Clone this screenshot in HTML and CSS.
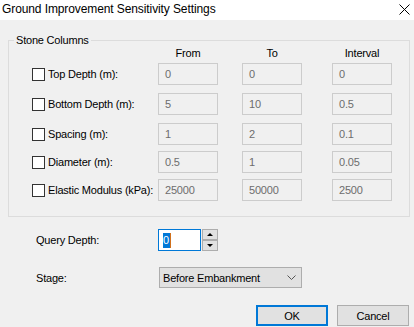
FILE: index.html
```html
<!DOCTYPE html>
<html lang="en">
<head>
  <meta charset="UTF-8" />
  <title>Ground Improvement Sensitivity Settings</title>
  <link rel="stylesheet" href="styles.css">
</head>
<body>
  <div class="dialog">
    <div class="titlebar">
      <span class="title">Ground Improvement Sensitivity Settings</span>
      <svg class="close" width="11" height="11" viewBox="0 0 11 11">
        <path d="M0.5 0.5 L10.5 10.5 M10.5 0.5 L0.5 10.5" stroke="#000" stroke-width="1" fill="none" />
      </svg>
    </div>

    <fieldset class="group">
      <legend>Stone Columns</legend>
      <div class="grid">
        <div></div>
        <div class="col-head">From</div>
        <div class="col-head">To</div>
        <div class="col-head">Interval</div>

        <label class="check"><span class="box"></span>Top Depth (m):</label>
        <div class="field">0</div>
        <div class="field">0</div>
        <div class="field">0</div>

        <label class="check"><span class="box"></span>Bottom Depth (m):</label>
        <div class="field">5</div>
        <div class="field">10</div>
        <div class="field">0.5</div>

        <label class="check"><span class="box"></span>Spacing (m):</label>
        <div class="field">1</div>
        <div class="field">2</div>
        <div class="field">0.1</div>

        <label class="check"><span class="box"></span>Diameter (m):</label>
        <div class="field">0.5</div>
        <div class="field">1</div>
        <div class="field">0.05</div>

        <label class="check"><span class="box"></span>Elastic Modulus (kPa):</label>
        <div class="field">25000</div>
        <div class="field">50000</div>
        <div class="field">2500</div>
      </div>
    </fieldset>

    <div class="row query">
      <span class="row-label">Query Depth:</span>
      <div class="spin">
        <div class="spin-input"><span class="sel">0</span><span class="caret"></span></div>
        <div class="spin-btns">
          <div class="spin-btn"><span class="tri-up"></span></div>
          <div class="spin-btn"><span class="tri-down"></span></div>
        </div>
      </div>
    </div>

    <div class="row stage">
      <span class="row-label">Stage:</span>
      <div class="combo">
        <span>Before Embankment</span>
        <svg width="9" height="5" viewBox="0 0 9 5">
          <path d="M0.5 0.5 L4.5 4.5 L8.5 0.5" stroke="#555" stroke-width="1" fill="none" />
        </svg>
      </div>
    </div>

    <div class="buttons">
      <button class="btn default">OK</button>
      <button class="btn">Cancel</button>
    </div>
  </div>
</body>
</html>
```

FILE: styles.css
```css
body {
  margin: 0;
  font-family: 'Segoe UI', 'Liberation Sans', sans-serif;
  font-size: 11px;
  letter-spacing: -0.2px;
  color: #000;
  background: #f0f0f0;
}
.dialog {
  width: 414px;
  height: 327px;
  background: #f0f0f0;
  overflow: hidden;
}
.titlebar {
  height: 20px;
  background: #fff;
  display: flex;
  align-items: center;
  justify-content: space-between;
  padding: 0 4px 2px 2px;
  box-sizing: border-box;
}
.title {
  font-size: 12px;
  letter-spacing: -0.1px;
}
.group {
  margin: 14px 0 0 8px;
  width: 402px;
  box-sizing: border-box;
  border: 1px solid #dcdcdc;
  padding: 0 0 13px 23px;
  height: 183px;
}
.group legend {
  margin-left: -18px;
  padding: 0 2px;
  line-height: 12px;
}
.grid {
  display: grid;
  grid-template-columns: 126px 84px 90px 60px;
  grid-template-rows: 17px 30px 30px 28px 28px 22px;
  align-items: start;
}
.col-head {
  width: 60px;
  text-align: center;
  line-height: 14px;
}
.check {
  display: flex;
  align-items: center;
  height: 22px;
  white-space: nowrap;
}
.box {
  width: 13px;
  height: 13px;
  box-sizing: border-box;
  border: 1px solid #333;
  background: #fff;
  margin-right: 3px;
  flex: none;
}
.field {
  width: 60px;
  height: 22px;
  box-sizing: border-box;
  border: 1px solid #cccccc;
  background: #f0f0f0;
  color: #6d6d6d;
  padding: 0 6px;
  line-height: 20px;
}
.row {
  display: flex;
  align-items: center;
  padding-left: 36px;
}
.row-label {
  width: 122px;
}
.query {
  margin-top: 12px;
  height: 22px;
}
.spin {
  display: flex;
  height: 22px;
}
.spin-input {
  width: 43px;
  box-sizing: border-box;
  border: 1px solid #0078d7;
  background: #fff;
  display: flex;
  align-items: center;
  padding-left: 4px;
}
.sel {
  background: #0078d7;
  color: #fff;
  line-height: 15px;
  padding: 0 1px 0 0;
}
.caret {
  width: 1px;
  height: 15px;
  background: #d0701c;
}
.spin-btns {
  display: flex;
  flex-direction: column;
  margin-left: 1px;
}
.spin-btn {
  width: 16px;
  height: 11px;
  box-sizing: border-box;
  border: 1px solid #adadad;
  background: #e1e1e1;
  display: flex;
  align-items: center;
  justify-content: center;
}
.tri-up {
  width: 0;
  height: 0;
  border-left: 3px solid transparent;
  border-right: 3px solid transparent;
  border-bottom: 3px solid #000;
}
.tri-down {
  width: 0;
  height: 0;
  border-left: 3px solid transparent;
  border-right: 3px solid transparent;
  border-top: 3px solid #000;
}
.stage {
  margin-top: 16px;
  height: 21px;
}
.stage .row-label {
  width: 123px;
}
.combo {
  width: 143px;
  height: 21px;
  box-sizing: border-box;
  border: 1px solid #adadad;
  background: #e1e1e1;
  display: flex;
  align-items: center;
  justify-content: space-between;
  padding: 0 5px 0 3px;
}
.buttons {
  display: flex;
  justify-content: flex-end;
  gap: 9px;
  margin-top: 17px;
  padding-right: 5px;
}
.btn {
  width: 72px;
  height: 21px;
  box-sizing: border-box;
  border: 1px solid #adadad;
  background: #e1e1e1;
  font-family: inherit;
  font-size: 11px;
  letter-spacing: -0.2px;
  color: #000;
  padding: 0;
}
.btn.default {
  border: 2px solid #0078d7;
}
```
